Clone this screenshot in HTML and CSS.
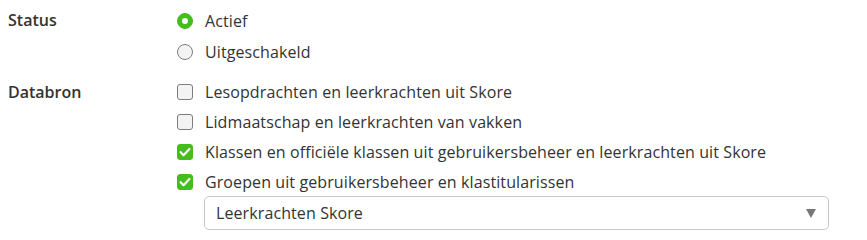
FILE: index.html
```html
<!DOCTYPE html>
<html lang="nl">
<head>
<meta charset="utf-8">
<title>Instellingen</title>
<link rel="stylesheet" href="styles.css">
</head>
<body>
<div class="form">
  <div class="row">
    <div class="label">Status</div>
    <div class="options">
      <div class="opt"><span class="radio on"></span><span>Actief</span></div>
      <div class="opt"><span class="radio"></span><span>Uitgeschakeld</span></div>
    </div>
  </div>
  <div class="row">
    <div class="label">Databron</div>
    <div class="options checks">
      <div class="opt"><span class="box"></span><span>Lesopdrachten en leerkrachten uit Skore</span></div>
      <div class="opt"><span class="box"></span><span>Lidmaatschap en leerkrachten van vakken</span></div>
      <div class="opt"><span class="box on"><svg viewBox="0 0 16 16" width="16" height="16"><path d="M3.6 8.2 L6.6 11.2 L12.4 5" fill="none" stroke="#fff" stroke-width="2.2" stroke-linecap="round" stroke-linejoin="round"/></svg></span><span>Klassen en officiële klassen uit gebruikersbeheer en leerkrachten uit Skore</span></div>
      <div class="opt"><span class="box on"><svg viewBox="0 0 16 16" width="16" height="16"><path d="M3.6 8.2 L6.6 11.2 L12.4 5" fill="none" stroke="#fff" stroke-width="2.2" stroke-linecap="round" stroke-linejoin="round"/></svg></span><span>Groepen uit gebruikersbeheer en klastitularissen</span></div>
      <div class="select"><span>Leerkrachten Skore</span><span class="arrow"></span></div>
    </div>
  </div>
</div>
</body>
</html>
```

FILE: styles.css
```css
html, body {
  margin: 0;
  padding: 0;
  background: #fff;
}
body {
  font-family: "Open Sans", "Liberation Sans", sans-serif;
  font-size: 16px;
  color: #333;
}
.form {
  padding: 5px 8px 0 8px;
  display: flex;
  flex-direction: column;
  gap: 10px;
}
.row {
  display: grid;
  grid-template-columns: 169px 652px;
}
.label {
  font-weight: 600;
  height: 31px;
  line-height: 31px;
}
.row:nth-child(2) .label {
  height: 30px;
  line-height: 30px;
}
.options {
  display: flex;
  flex-direction: column;
  letter-spacing: 0.1px;
}
.opt {
  display: flex;
  align-items: center;
  height: 31px;
  gap: 12px;
}
.checks .opt {
  height: 30px;
}
.radio {
  width: 16px;
  height: 16px;
  box-sizing: border-box;
  border-radius: 50%;
  border: 1px solid #7d7d7d;
  background: #f3f3f3;
  flex: none;
  display: flex;
  align-items: center;
  justify-content: center;
}
.radio.on {
  background: #45bd1a;
  border-color: #45bd1a;
}
.radio.on::after {
  content: "";
  width: 6px;
  height: 6px;
  border-radius: 50%;
  background: #fff;
}
.box {
  width: 16px;
  height: 16px;
  box-sizing: border-box;
  border-radius: 3px;
  border: 1px solid #7d7d7d;
  background: #f3f3f3;
  flex: none;
  display: flex;
}
.box.on {
  background: #45bd1a;
  border-color: #45bd1a;
}
.box.on svg {
  margin: -1px;
}
.select {
  margin-top: -1px;
  margin-left: 27px;
  height: 34px;
  box-sizing: border-box;
  border: 1px solid #c8c8c8;
  border-radius: 5px;
  display: flex;
  align-items: center;
  justify-content: space-between;
  padding: 0 12px 0 11px;
}
.arrow {
  width: 0;
  height: 0;
  border-left: 5px solid transparent;
  border-right: 5px solid transparent;
  border-top: 9px solid #777;
}
```
